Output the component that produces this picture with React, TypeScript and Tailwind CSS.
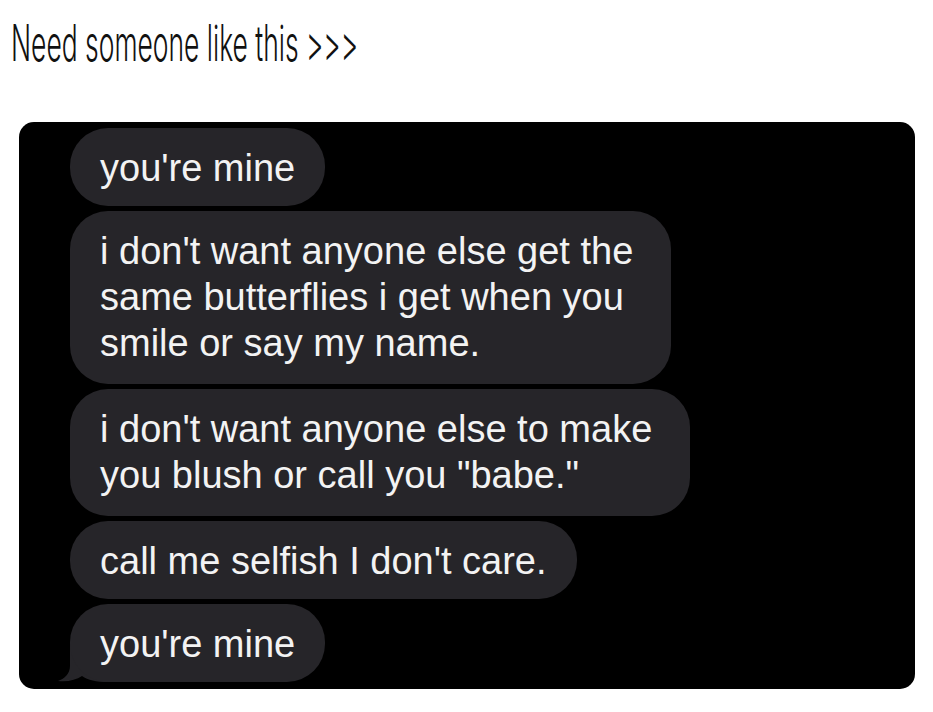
import React from 'react';

const Bubble: React.FC<{ children: React.ReactNode; tail?: boolean; multi?: boolean }> = ({ children, tail, multi }) => {
  return (
    <div className="relative w-fit">
      {tail && (
        <svg className="absolute -left-[12px] bottom-0" width="50" height="38" viewBox="0 0 50 38">
          <path d="M12 0 L12 22 C12 30 6 35 0 37 C10 38 18 36 24 32 C30 36 38 38 50 38 L50 0 Z" fill="#262529" />
        </svg>
      )}
      <div
        className={
          multi
            ? 'relative rounded-[38px] bg-[#262529] pl-[30px] pr-[38px] pt-[17px] pb-[18px] text-[38px] leading-[46px] text-[#f3f3f3] whitespace-nowrap'
            : 'relative rounded-[38px] bg-[#262529] pl-[30px] pr-[30px] pt-[17px] pb-[15px] text-[38px] leading-[46px] text-[#f3f3f3] whitespace-nowrap'
        }
      >
        {children}
      </div>
    </div>
  );
};

export default function App() {
  return (
    <div className="bg-white min-h-screen w-[933px] h-[712px] overflow-hidden font-['Liberation_Sans',Arial,sans-serif]">
      {/* Tweet text */}
      <div className="pt-[18px] pl-[11px] h-[69px]">
        <div className="inline-block origin-left scale-x-[0.529] font-['Inter',sans-serif] font-light text-[50px] leading-[50px] text-[#111111] whitespace-nowrap">
          Need someone like this &gt;&gt;&gt;
        </div>
      </div>

      {/* Screenshot card */}
      <div className="mt-[53px] ml-[19px] w-[896px] h-[567px] rounded-[15px] bg-black pl-[51px] pt-[6px] flex flex-col gap-[5px]">
        <Bubble>you're mine</Bubble>
        <Bubble multi>
          i don't want anyone else get the
          <br />
          same butterflies i get when you
          <br />
          smile or say my name.
        </Bubble>
        <Bubble multi>
          i don't want anyone else to make
          <br />
          you blush or call you "babe."
        </Bubble>
        <Bubble>call me selfish I don't care.</Bubble>
        <Bubble tail>you're mine</Bubble>
      </div>
    </div>
  );
}
